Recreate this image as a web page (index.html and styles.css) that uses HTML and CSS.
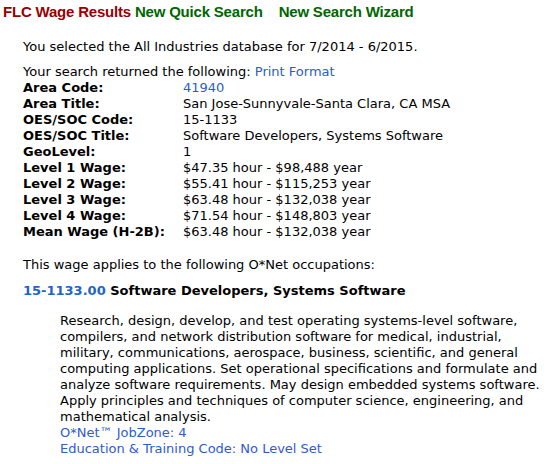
FILE: index.html
```html
<!DOCTYPE html>
<html>
<head>
<meta charset="utf-8">
<link rel="stylesheet" href="styles.css">
</head>
<body>
<div class="nav">
  <span class="title">FLC Wage Results</span>
  <a class="navlink">New Quick Search</a>
  <a class="navlink wiz">New Search Wizard</a>
</div>
<div class="main">
  <p class="sel">You selected the All Industries database for 7/2014 - 6/2015.</p>
  <p class="ret">Your search returned the following: <a class="lnk">Print Format</a></p>
  <div class="grid">
    <div class="lbl">Area Code:</div><div><a class="lnk">41940</a></div>
    <div class="lbl">Area Title:</div><div>San Jose-Sunnyvale-Santa Clara, CA MSA</div>
    <div class="lbl">OES/SOC Code:</div><div>15-1133</div>
    <div class="lbl">OES/SOC Title:</div><div>Software Developers, Systems Software</div>
    <div class="lbl">GeoLevel:</div><div>1</div>
    <div class="lbl">Level 1 Wage:</div><div>$47.35 hour - $98,488 year</div>
    <div class="lbl">Level 2 Wage:</div><div>$55.41 hour - $115,253 year</div>
    <div class="lbl">Level 3 Wage:</div><div>$63.48 hour - $132,038 year</div>
    <div class="lbl">Level 4 Wage:</div><div>$71.54 hour - $148,803 year</div>
    <div class="lbl">Mean Wage (H-2B):</div><div>$63.48 hour - $132,038 year</div>
  </div>
  <p class="applies">This wage applies to the following O*Net occupations:</p>
  <p class="occ"><a class="code">15-1133.00</a> Software Developers, Systems Software</p>
  <div class="desc">
    <p>Research, design, develop, and test operating systems-level software, compilers, and network distribution software for medical, industrial, military, communications, aerospace, business, scientific, and general computing applications. Set operational specifications and formulate and analyze software requirements. May design embedded systems software. Apply principles and techniques of computer science, engineering, and mathematical analysis.</p>
    <a class="lnk blk">O*Net™ JobZone: 4</a>
    <a class="lnk blk">Education &amp; Training Code: No Level Set</a>
  </div>
</div>
</body>
</html>
```
FILE: styles.css
```css
body {
  margin: 0;
  background: #fff;
  color: #000;
  font-family: "DejaVu Sans", Verdana, sans-serif;
  font-size: 13px;
  line-height: 16px;
}
p { margin: 0; }
a { text-decoration: none; }
.nav {
  font-family: "Liberation Sans", Arial, sans-serif;
  font-weight: bold;
  font-size: 15px;
  line-height: 17px;
  letter-spacing: -0.2px;
  padding: 3px 0 0 3px;
  display: flex;
  gap: 4px;
}
.title { color: #990000; }
.navlink { color: #006600; }
.wiz { margin-left: 12px; }
.main {
  padding: 19px 0 0 23px;
}
.sel { margin-bottom: 9px; }
.lnk { color: #2d5ccb; }
.grid {
  display: grid;
  grid-template-columns: 160px auto;
}
.lbl { font-weight: bold; }
.applies { margin-top: 17px; }
.occ { margin-top: 10px; font-weight: bold; }
.code { color: #1f64c8; }
.desc {
  margin: 14px 0 0 37px;
  width: 480px;
}
.blk { display: block; }
```
